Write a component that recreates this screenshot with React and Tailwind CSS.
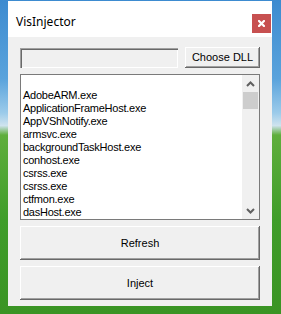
const processes = [
  '',
  'AdobeARM.exe',
  'ApplicationFrameHost.exe',
  'AppVShNotify.exe',
  'armsvc.exe',
  'backgroundTaskHost.exe',
  'conhost.exe',
  'csrss.exe',
  'csrss.exe',
  'ctfmon.exe',
  'dasHost.exe',
];

const raised =
  'bg-[#f0f0f0] shadow-[inset_-1px_-1px_0_#696969,inset_1px_1px_0_#ffffff,inset_-2px_-2px_0_#a0a0a0]';

const App = () => {
  return (
    <div className="w-[281px] h-[314px] overflow-hidden bg-[linear-gradient(to_bottom,#3d8bd0_0%,#5aa3dc_25%,#9ccbea_36%,#cfe3ee_40%,#5fae3c_43%,#3f9d2a_70%,#3a9424_100%)] pl-[8px] pt-[1px] font-['Liberation_Sans',Arial,sans-serif] text-black">
      <div className="w-[264px] h-[305px] flex flex-col bg-[#f0f0f0]">
        {/* title bar */}
        <div className="h-[36px] bg-white flex items-start justify-between">
          <span className="pl-[8px] pt-[13px] text-[12px] leading-[16px] font-['Noto_Sans',sans-serif]">
            VisInjector
          </span>
          <div className="mt-[13px] mr-[1px] w-[19px] h-[19px] bg-[#c75050] flex items-center justify-center">
            <svg width="7" height="7" viewBox="0 0 7 7">
              <path d="M1 1L6 6M6 1L1 6" stroke="#fff" strokeWidth="2.2" strokeLinecap="square" />
            </svg>
          </div>
        </div>

        <div className="flex flex-col px-[12px] pt-[10px]">
          <div className="flex items-start justify-between">
            <div className="mt-[1px] w-[158px] h-[20px] bg-[#f0f0f0] shadow-[inset_1px_1px_0_#a0a0a0,inset_2px_2px_0_#696969,inset_-1px_-1px_0_#ffffff]" />
            <button className={`w-[75px] h-[21px] text-[11px] leading-[13px] ${raised}`}>
              Choose DLL
            </button>
          </div>

          <div className="mt-[6px] h-[146px] border border-[#7a7a7a] bg-white flex">
            <ul className="flex-1 overflow-hidden pt-[1px] text-[11px] leading-[13px] tracking-[-0.25px]">
              {processes.map((p, i) => (
                <li key={i} className="h-[13px] pl-[2px] whitespace-nowrap">
                  {p}
                </li>
              ))}
            </ul>
            <div className="w-[17px] bg-[#f0f0f0] flex flex-col items-center">
              <div className="h-[17px] w-full flex items-center justify-center">
                <svg width="9" height="6" viewBox="0 0 9 6">
                  <path d="M1 5L4.5 1.5L8 5" stroke="#606060" strokeWidth="2" fill="none" />
                </svg>
              </div>
              <div className="w-[15px] h-[17px] bg-[#cdcdcd]" />
              <div className="flex-1" />
              <div className="h-[17px] w-full flex items-center justify-center">
                <svg width="9" height="6" viewBox="0 0 9 6">
                  <path d="M1 1L4.5 4.5L8 1" stroke="#606060" strokeWidth="2" fill="none" />
                </svg>
              </div>
            </div>
          </div>

          <button className={`mt-[6px] h-[34px] w-full text-[11px] ${raised}`}>Refresh</button>
          <button className={`mt-[6px] h-[34px] w-full text-[11px] ${raised}`}>Inject</button>
        </div>
      </div>
    </div>
  );
};

export default App;
